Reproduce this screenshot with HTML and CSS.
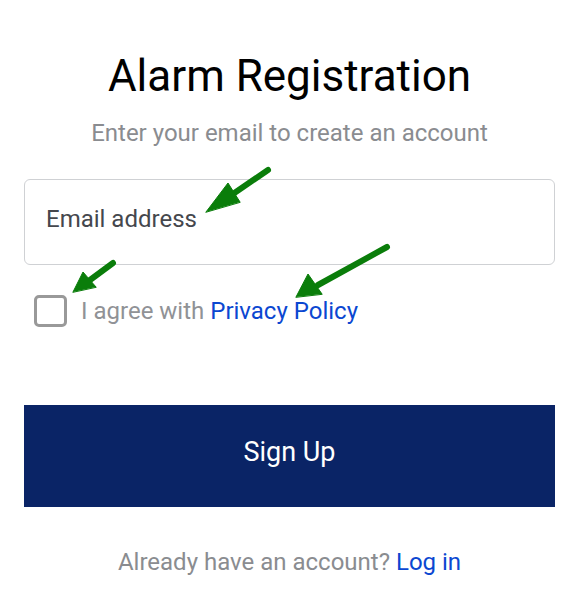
FILE: index.html
```html
<!DOCTYPE html>
<html lang="en">
<head>
    <meta charset="UTF-8">
    <meta name="viewport" content="width=device-width, initial-scale=1.0">
    <title>Alarm Registration</title>
    <link rel="stylesheet" href="styles.css">
</head>
<body>
    <div class="container">
        <h2>Alarm Registration</h2>
        <p class="subtitle">Enter your email to create an account</p>
        <form>
            <div class="email-box">
                <input type="email" id="email" name="email" placeholder="Email address">
            </div>
            <label class="agree">
                <input type="checkbox" id="agree" name="agree">
                <span class="box"></span>
                <span>I agree with <a href="#">Privacy Policy</a></span>
            </label>
            <input type="submit" value="Sign Up">
        </form>
        <p class="login">Already have an account? <a href="#">Log in</a></p>
    </div>
    <!-- annotation arrows -->
    <svg class="arrows" width="573" height="601" viewBox="0 0 573 601">
        <g stroke="#0a7d0a" stroke-width="6" stroke-linecap="round" fill="#0a7d0a">
            <line x1="268" y1="170" x2="230" y2="196"/>
            <polygon points="206,212 228,183 240,202" stroke-width="1"/>
            <line x1="113" y1="263" x2="90" y2="280"/>
            <polygon points="73,292 83,272 96,287" stroke-width="1"/>
            <line x1="387" y1="247" x2="318" y2="285"/>
            <polygon points="296,297 308,274 322,294" stroke-width="1"/>
        </g>
    </svg>
</body>
</html>
```

FILE: styles.css
```css
body {
    font-family: Roboto, "Liberation Sans", sans-serif;
    margin: 0;
    background-color: #fff;
    position: relative;
}
.container {
    padding: 0 18px 0 24px;
}
.container h2 {
    text-align: center;
    font-weight: 400;
    font-size: 44px;
    color: #000;
    margin: 52px 0 0;
    line-height: 48px;
}
.subtitle {
    text-align: center;
    font-size: 24px;
    color: #8a8c90;
    margin: 19px 0 0;
    line-height: 28px;
}
.email-box {
    margin-top: 32px;
}
.container input[type="email"] {
    width: 100%;
    height: 86px;
    padding: 0 21px 6px;
    border: 1px solid #cfd1d4;
    border-radius: 6px;
    box-sizing: border-box;
    font-family: inherit;
    font-size: 24px;
    outline: none;
}
.container input[type="email"]::placeholder {
    color: #45474d;
}
.agree {
    display: flex;
    align-items: center;
    gap: 14px;
    margin: 30px 0 0 10px;
    font-size: 24px;
    line-height: 32px;
    color: #909296;
    cursor: pointer;
}
.agree input {
    display: none;
}
.agree .box {
    width: 27px;
    height: 26px;
    border: 3px solid #999;
    border-radius: 5px;
    box-sizing: content-box;
}
.agree a,
.login a {
    color: #0b47d1;
    text-decoration: none;
}
.container input[type="submit"] {
    width: 100%;
    height: 102px;
    margin-top: 78px;
    padding-bottom: 10px;
    background-color: #0a2466;
    border: none;
    color: #fff;
    font-family: inherit;
    font-size: 27px;
    cursor: pointer;
}
.login {
    text-align: center;
    font-size: 24px;
    color: #8a8c90;
    margin: 41px 0 0;
}
.arrows {
    position: absolute;
    top: 0;
    left: 0;
    pointer-events: none;
}
```
